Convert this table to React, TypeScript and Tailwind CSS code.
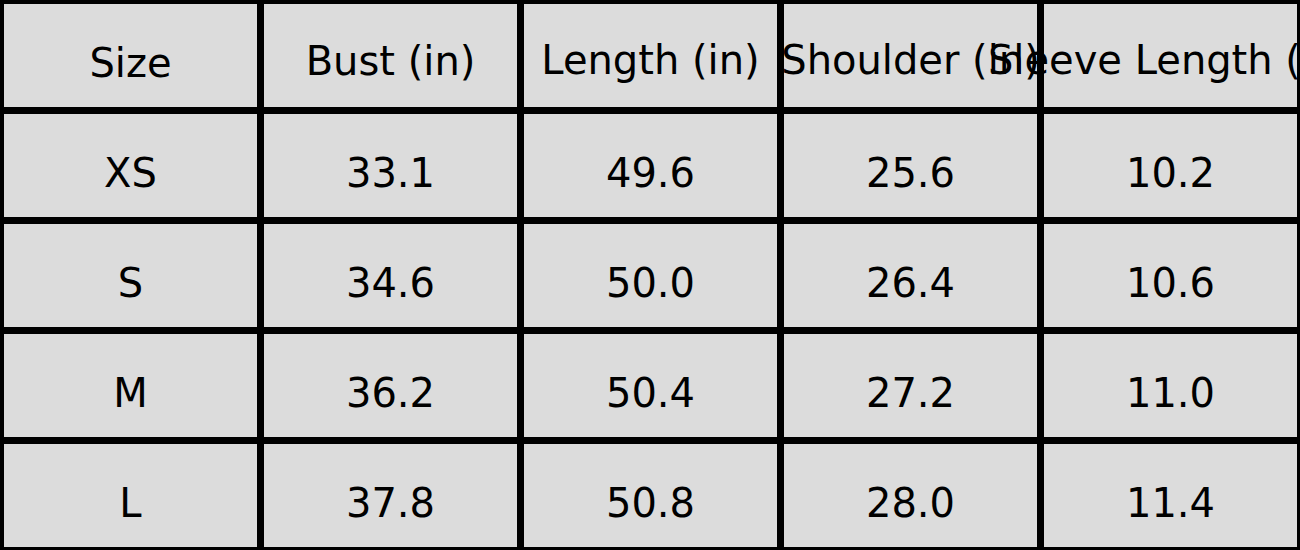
import React from 'react';

// 尺码表：表头 + 数据行
const HEADERS: { label: string; pad: string }[] = [
    { label: 'Size', pad: 'pt-[39px]' },
    { label: 'Bust (in)', pad: 'pt-[37px]' },
    { label: 'Length (in)', pad: 'pt-[36px]' },
    { label: 'Shoulder (in)', pad: 'pt-[36px]' },
    { label: 'Sleeve Length (in)', pad: 'pt-[36px]' },
];

const ROWS: string[][] = [
    ['XS', '33.1', '49.6', '25.6', '10.2'],
    ['S', '34.6', '50.0', '26.4', '10.6'],
    ['M', '36.2', '50.4', '27.2', '11.0'],
    ['L', '37.8', '50.8', '28.0', '11.4'],
];

const Cell: React.FC<{ text: string; pad: string }> = ({ text, pad }) => (
    <div className={`flex justify-center items-start bg-[#dcdcdc] ${pad}`}>
        <span className="whitespace-nowrap text-[40px] leading-[40px] text-black">{text}</span>
    </div>
);

export default function App() {
    return (
        <div
            className="w-[1300px] h-[550px] overflow-hidden bg-black pt-[4px] pl-[4px]"
            style={{ fontFamily: '"DejaVu Sans", "Liberation Sans", sans-serif' }}
        >
            <div className="grid grid-cols-[repeat(5,253px)] grid-rows-[repeat(5,103px)] gap-[7px]">
                {HEADERS.map((h) => (
                    <Cell key={h.label} text={h.label} pad={h.pad} />
                ))}
                {ROWS.map((row, r) =>
                    row.map((v, c) => <Cell key={`${r}-${c}`} text={v} pad="pt-[39px]" />)
                )}
            </div>
        </div>
    );
}
